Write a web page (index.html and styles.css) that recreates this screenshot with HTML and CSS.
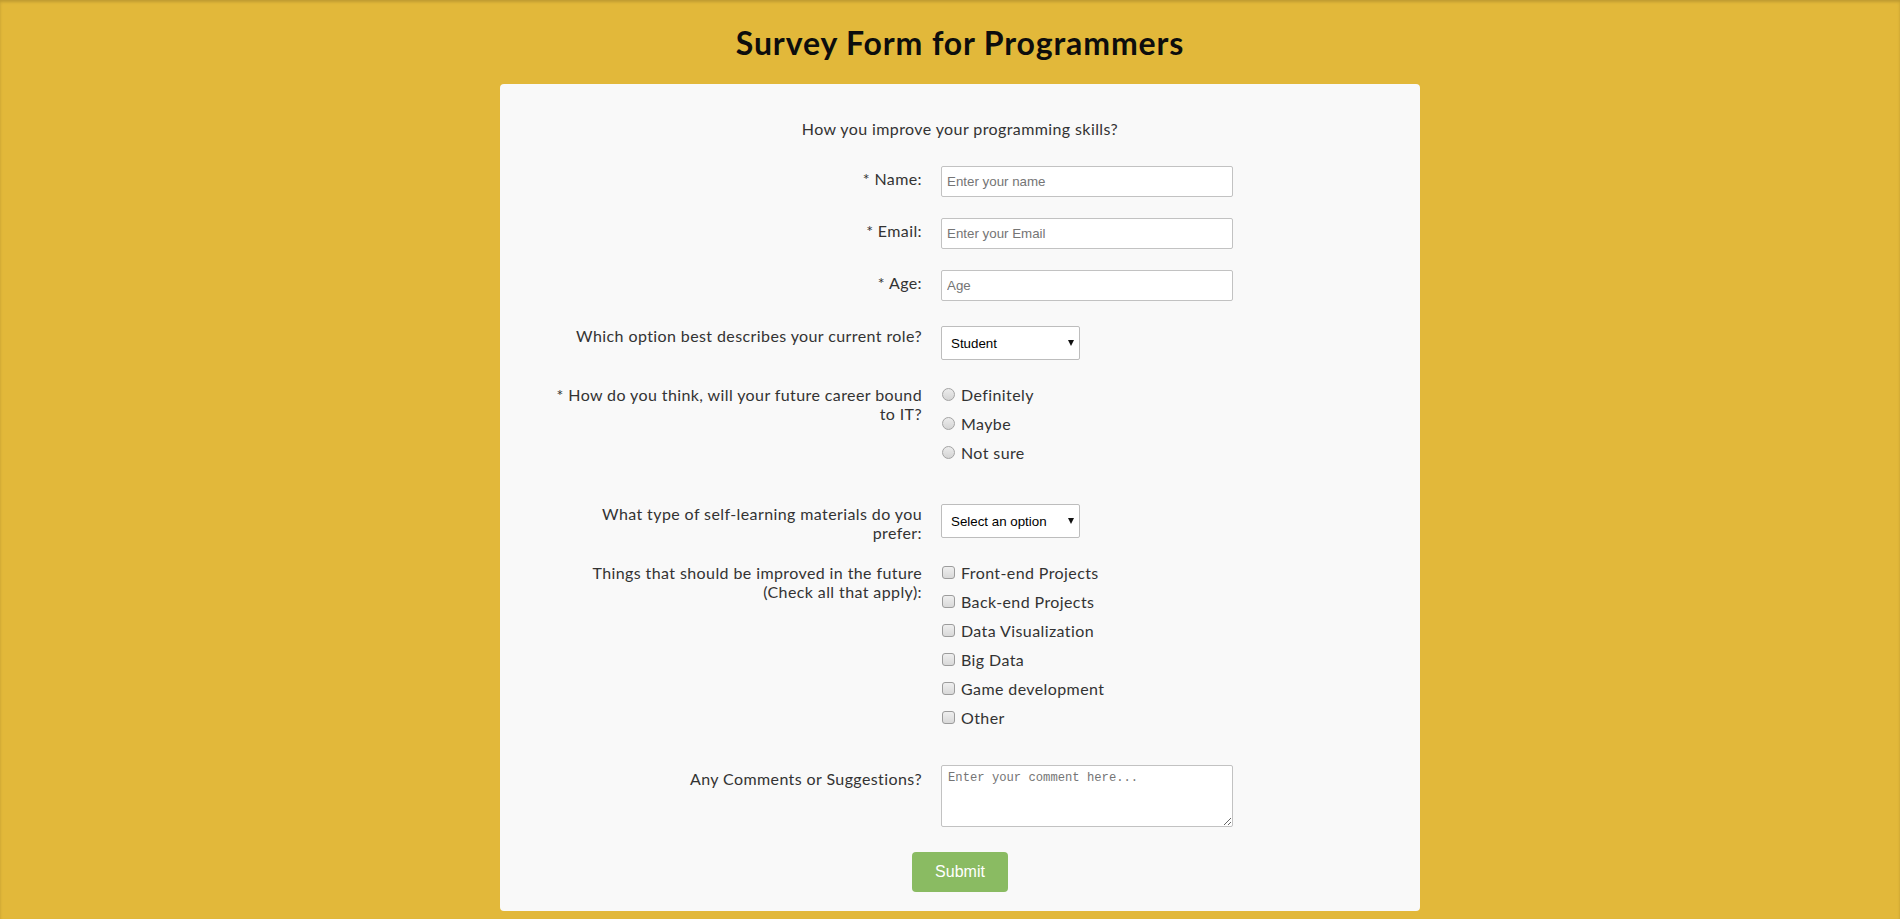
FILE: index.html
```html
<!DOCTYPE html>
<html lang="en">
<head>
<meta charset="utf-8">
<title>Survey Form for Programmers</title>
<link rel="stylesheet" href="styles.css">
</head>
<body>
<h1 class="title">Survey Form for Programmers</h1>
<form class="card">
  <p class="intro">How you improve your programming skills?</p>

  <div class="row row-name">
    <label class="lbl lbl-input" for="name">* Name:</label>
    <div class="field"><input class="text" id="name" type="text" placeholder="Enter your name"></div>
  </div>

  <div class="row row-email">
    <label class="lbl lbl-input" for="email">* Email:</label>
    <div class="field"><input class="text" id="email" type="email" placeholder="Enter your Email"></div>
  </div>

  <div class="row row-age">
    <label class="lbl lbl-input" for="age">* Age:</label>
    <div class="field"><input class="text" id="age" type="number" placeholder="Age"></div>
  </div>

  <div class="row row-role">
    <label class="lbl" for="role">Which option best describes your current role?</label>
    <div class="field">
      <span class="select-wrap">
        <select class="select" id="role">
          <option>Student</option>
          <option>Full Time Job</option>
          <option>Full Time Learner</option>
          <option>Other</option>
        </select>
        <span class="arrow"></span>
      </span>
    </div>
  </div>

  <div class="row row-career">
    <div class="lbl">* How do you think, will your future career bound<br>to IT?</div>
    <div class="field list">
      <label class="item"><input class="radio" type="radio" name="career">Definitely</label>
      <label class="item"><input class="radio" type="radio" name="career">Maybe</label>
      <label class="item"><input class="radio" type="radio" name="career">Not sure</label>
    </div>
  </div>

  <div class="row row-material">
    <label class="lbl" for="material">What type of self-learning materials do you<br>prefer:</label>
    <div class="field">
      <span class="select-wrap">
        <select class="select" id="material">
          <option>Select an option</option>
          <option>Videos</option>
          <option>Books</option>
          <option>Articles</option>
        </select>
        <span class="arrow"></span>
      </span>
    </div>
  </div>

  <div class="row row-things">
    <div class="lbl">Things that should be improved in the future<br>(Check all that apply):</div>
    <div class="field list">
      <label class="item"><input class="check" type="checkbox">Front-end Projects</label>
      <label class="item"><input class="check" type="checkbox">Back-end Projects</label>
      <label class="item"><input class="check" type="checkbox">Data Visualization</label>
      <label class="item"><input class="check" type="checkbox">Big Data</label>
      <label class="item"><input class="check" type="checkbox">Game development</label>
      <label class="item"><input class="check" type="checkbox">Other</label>
    </div>
  </div>

  <div class="row row-comments">
    <label class="lbl lbl-comments" for="comments">Any Comments or Suggestions?</label>
    <div class="field"><textarea class="area" id="comments" placeholder="Enter your comment here..."></textarea></div>
  </div>

  <div class="actions">
    <button class="submit" type="submit">Submit</button>
  </div>
</form>
</body>
</html>
```
FILE: styles.css
```css
html, body {
  margin: 0;
}

body {
  min-height: 100vh;
  box-sizing: border-box;
  padding: 0 0 0 20px;
  background: #e2b83a;
  box-shadow: inset 0 2px 3px rgba(0, 0, 0, 0.16);
  font-family: Lato, "Open Sans", sans-serif;
  color: #2b2b2b;
  overflow: hidden;
}

.title {
  margin: 23px 0 21px;
  font-size: 32px;
  line-height: 40px;
  font-weight: 700;
  letter-spacing: 0.87px;
  text-align: center;
  color: #0d0d0d;
}

.card {
  width: 920px;
  margin: 0 auto;
  box-sizing: border-box;
  padding: 35px 0 19px;
  background: #f9f9f9;
  border-radius: 4px;
}

.intro {
  margin: 0 0 27px;
  font-size: 16px;
  line-height: 20px;
  letter-spacing: 0.4px;
  text-align: center;
  color: #333;
}

.row {
  display: grid;
  grid-template-columns: 372px 292px;
  column-gap: 19px;
  padding-left: 50px;
  align-items: start;
}

.lbl {
  font-size: 16px;
  line-height: 19px;
  letter-spacing: 0.4px;
  text-align: right;
  color: #333;
}

.lbl-input {
  padding-top: 3px;
}

.lbl-comments {
  padding-top: 4px;
}

.row-name,
.row-email {
  margin-bottom: 21px;
}

.row-age {
  margin-bottom: 25px;
}

.row-role {
  margin-bottom: 25px;
}

.row-career {
  margin-bottom: 42px;
}

.row-material {
  margin-bottom: 21px;
}

.row-things {
  margin-bottom: 38px;
}

.row-comments {
  margin-bottom: 25px;
}

.text {
  display: block;
  width: 292px;
  height: 31px;
  box-sizing: border-box;
  margin: 0;
  padding: 0 5px;
  border: 1px solid #c2c2c2;
  border-radius: 2px;
  background: #fff;
  font-family: "Liberation Sans", Arial, sans-serif;
  font-size: 13.33px;
  color: #222;
  outline: none;
}

.text::placeholder {
  color: #757575;
}

.text::-webkit-outer-spin-button,
.text::-webkit-inner-spin-button {
  -webkit-appearance: none;
  margin: 0;
}

.select-wrap {
  position: relative;
  display: inline-block;
  vertical-align: top;
}

.select {
  display: block;
  width: 139px;
  height: 34px;
  box-sizing: border-box;
  margin: 0;
  padding: 0 20px 0 9px;
  -webkit-appearance: none;
  appearance: none;
  border: 1px solid #bdbdbd;
  border-radius: 2px;
  background: #fff;
  font-family: "Liberation Sans", Arial, sans-serif;
  font-size: 13.33px;
  color: #000;
  outline: none;
}

.arrow {
  position: absolute;
  right: 6px;
  top: 14px;
  width: 0;
  height: 0;
  border-left: 3.5px solid transparent;
  border-right: 3.5px solid transparent;
  border-top: 6px solid #111;
  pointer-events: none;
}

.list {
  display: flex;
  flex-direction: column;
  gap: 10px;
}

.item {
  display: flex;
  align-items: center;
  height: 19px;
  font-size: 16px;
  letter-spacing: 0.4px;
  color: #333;
}

.radio,
.check {
  -webkit-appearance: none;
  appearance: none;
  flex: none;
  width: 13px;
  height: 13px;
  box-sizing: border-box;
  margin: 0 6px 0 1px;
  border: 1px solid #a3a3a3;
  background: linear-gradient(#ececec, #d4d4d4);
}

.radio {
  border-radius: 50%;
}

.check {
  border-radius: 3px;
  border-color: #9c9c9c;
  background: linear-gradient(#efefef, #d9d9d9);
}

.area {
  display: block;
  width: 292px;
  height: 62px;
  box-sizing: border-box;
  margin: 0;
  padding: 5px 6px;
  border: 1px solid #c2c2c2;
  border-radius: 2px;
  background: #fff;
  font-family: "Liberation Mono", monospace;
  font-size: 12.2px;
  line-height: 15px;
  color: #222;
  resize: both;
  outline: none;
}

.area::placeholder {
  color: #757575;
}

.actions {
  display: flex;
  justify-content: center;
}

.submit {
  width: 96px;
  height: 40px;
  margin: 0;
  padding: 0;
  border: none;
  border-radius: 4px;
  background: #8abb62;
  font-family: "Liberation Sans", Arial, sans-serif;
  font-size: 16px;
  color: #fff;
  cursor: pointer;
}
```
